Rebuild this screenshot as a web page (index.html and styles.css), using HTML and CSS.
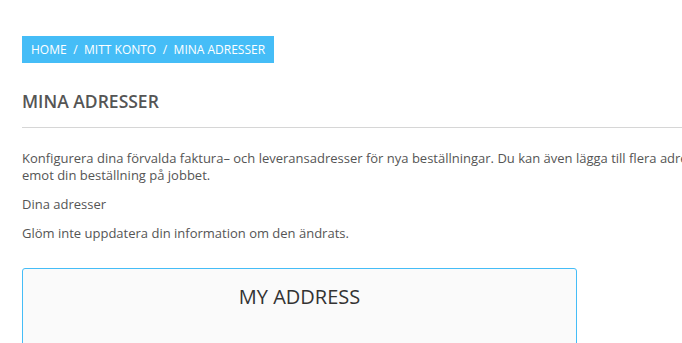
FILE: index.html
```html
<!DOCTYPE html>
<html lang="sv">
  <head>
    <meta charset="UTF-8" />
    <meta name="viewport" content="width=device-width, initial-scale=1.0" />
    <title>Mina adresser</title>
    <link rel="stylesheet" href="styles.css">
  </head>
  <body>
    <main class="sida">
      <nav class="brodsmulor">
        <a href="#">Home</a><span class="delare">/</span><a href="#">Mitt konto</a><span class="delare">/</span><span>Mina adresser</span>
      </nav>
      <h1 class="rubrik">Mina adresser</h1>
      <p class="info">Konfigurera dina förvalda faktura– och leveransadresser för nya beställningar. Du kan även lägga till flera adresser, vilket kan vara användbart om du vill ta emot din beställning på jobbet.</p>
      <p class="info">Dina adresser</p>
      <p class="info">Glöm inte uppdatera din information om den ändrats.</p>
      <div class="adresser">
        <div class="kort">
          <h3 class="kort-rubrik">My address</h3>
        </div>
      </div>
    </main>
  </body>
</html>
```

FILE: styles.css
```css
html, body{
    overflow: hidden;
}
body{
    margin: 0;
    font-family: "Open Sans", "Noto Sans", sans-serif;
    color: #555;
    background: #fff;
}
.sida{
    width: 962px;
    padding: 36px 0 0 22px;
}
.brodsmulor{
    display: inline-block;
    background-color: #45bdf7;
    color: #fff;
    font-size: 12px;
    line-height: 17px;
    text-transform: uppercase;
    padding: 5px 9px 5px 9px;
}
.brodsmulor a{
    color: #fff;
    text-decoration: none;
}
.delare{
    padding: 0 6.5px;
}
.rubrik{
    font-size: 17.5px;
    font-weight: 600;
    text-transform: uppercase;
    color: #555;
    margin: 27px 0 0 0;
    padding-bottom: 15px;
    border-bottom: 1px solid #d6d6d6;
    line-height: 22px;
}
.info{
    font-size: 13px;
    line-height: 17px;
    margin: 0 0 12px 0;
}
.rubrik + .info{
    margin-top: 22px;
}
.adresser{
    margin-top: 26px;
}
.kort{
    width: 553px;
    height: 120px;
    background: #fafafa;
    border: 1px solid #45bdf7;
    border-radius: 3px;
}
.kort-rubrik{
    text-align: center;
    font-size: 20px;
    font-weight: 400;
    color: #333;
    text-transform: uppercase;
    margin: 15px 0 0 0;
    line-height: 26px;
}
```
